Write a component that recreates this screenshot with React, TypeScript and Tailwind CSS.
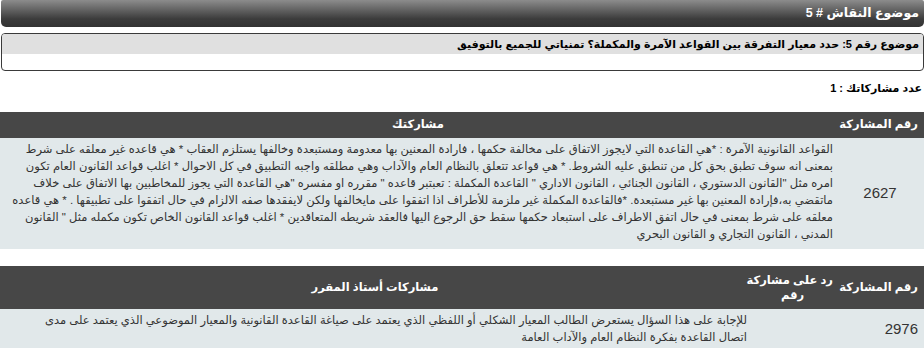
import React from "react";

const answerLines = [
    "القواعد القانونية الآمرة : *هي القاعدة التي لايجوز الاتفاق على مخالفة حكمها ، فارادة المعنين بها معدومة ومستبعدة وخالفها يستلزم العقاب * هي قاعده غير معلقه على شرط",
    "بمعنى انه سوف تطبق بحق كل من تنطبق عليه الشروط. * هي قواعد تتعلق بالنظام العام والآداب وهي مطلقه واجبه التطبيق في كل الاحوال * اغلب قواعد القانون العام تكون",
    "امره مثل \"القانون الدستوري ، القانون الجنائي ، القانون الاداري \" القاعدة المكملة : تعبتبر قاعده \" مقرره او مفسره \"هي القاعدة التي يجوز للمخاطبين بها الاتفاق على خلاف",
    "ماتقضي به،فإرادة المعنين بها غير مستبعدة. *فالقاعدة المكملة غير ملزمة للأطراف اذا اتفقوا على مايخالفها ولكن لايفقدها صفه الالزام في حال اتفقوا على تطبيقها . * هي قاعده",
    "معلقه على شرط بمعنى في حال اتفق الاطراف على استبعاد حكمها سقط حق الرجوع اليها فالعقد شريطه المتعاقدين * اغلب قواعد القانون الخاص تكون مكمله مثل \" القانون",
    "المدني ، القانون التجاري و القانون البحري",
];

const teacherLines = [
    "للإجابة على هذا السؤال يستعرض الطالب المعيار الشكلي أو اللفظي الذي يعتمد على صياغة القاعدة القانونية والمعيار الموضوعي الذي يعتمد على مدى",
    "اتصال القاعدة بفكرة النظام العام والآداب العامة",
];

function Lines({ lines }: { lines: string[] }) {
    return (
        <>
            {lines.map((l, i) => (
                <div key={i} className="whitespace-nowrap">
                    {l}
                </div>
            ))}
        </>
    );
}

export default function App() {
    return (
        <div
            dir="rtl"
            className="h-[348px] w-[924px] overflow-hidden bg-white font-['Liberation_Sans','DejaVu_Sans',sans-serif] text-[13px] text-black"
        >
            {/* page title bar */}
            <div className="ml-[1px] flex h-[27px] items-center rounded-t-[2px] rounded-b-[5px] bg-[linear-gradient(to_bottom,#8c8c8c,#3c3c3c_70%,#333333)] px-[5px] text-[12.5px] font-bold text-white">
                موضوع النقاش # 5
            </div>

            {/* topic box */}
            <div className="ml-[1px] mt-[6px] h-[38px] overflow-hidden rounded-[4px] border border-[#3a3a3a]">
                <div className="flex h-[20px] items-center whitespace-nowrap bg-[#e0e0e0] px-[4px] text-[11px] font-bold">
                    موضوع رقم 5: حدد معيار التفرقة بين القواعد الآمرة والمكملة؟ تمنياتي للجميع بالتوفيق
                </div>
            </div>

            <div className="mt-[9px] flex h-[16px] items-center px-[2px] text-[11px] font-bold">عدد مشاركاتك : 1</div>

            {/* my posts */}
            <table className="mt-[16px] w-full table-fixed border-collapse">
                <thead>
                    <tr className="h-[26px] bg-[#474747] text-[11.5px] text-white">
                        <th className="w-[88px] whitespace-nowrap px-[6px] text-right font-bold">رقم المشاركة</th>
                        <th className="text-center font-bold">مشاركتك</th>
                    </tr>
                </thead>
                <tbody>
                    <tr className="h-[110px] bg-[#e1e8ea] text-[#333]">
                        <td className="text-center font-['Liberation_Sans',sans-serif] text-[15px]">2627</td>
                        <td className="overflow-hidden px-[3px] pb-[6px] pt-[3px] align-top text-[11.5px] leading-[17px]">
                            <Lines lines={answerLines} />
                        </td>
                    </tr>
                </tbody>
            </table>

            {/* teacher posts */}
            <table className="mt-[17px] w-full table-fixed border-collapse">
                <thead>
                    <tr className="h-[43px] bg-[#474747] text-[11.5px] text-white">
                        <th className="w-[89px] whitespace-nowrap px-[6px] text-right font-bold">رقم المشاركة</th>
                        <th className="w-[85px] whitespace-nowrap px-[2px] text-center font-bold leading-[15px]">
                            رد على مشاركة
                            <br />
                            رقم
                        </th>
                        <th className="text-center font-bold">مشاركات أستاذ المقرر</th>
                    </tr>
                </thead>
                <tbody>
                    <tr className="bg-[#e1e8ea] text-[#333]">
                        <td className="px-[6px] text-right font-['Liberation_Sans',sans-serif] text-[15px]">2976</td>
                        <td></td>
                        <td className="overflow-hidden px-[3px] py-[3px] text-[11.5px] leading-[17px]">
                            <Lines lines={teacherLines} />
                        </td>
                    </tr>
                </tbody>
            </table>
        </div>
    );
}
